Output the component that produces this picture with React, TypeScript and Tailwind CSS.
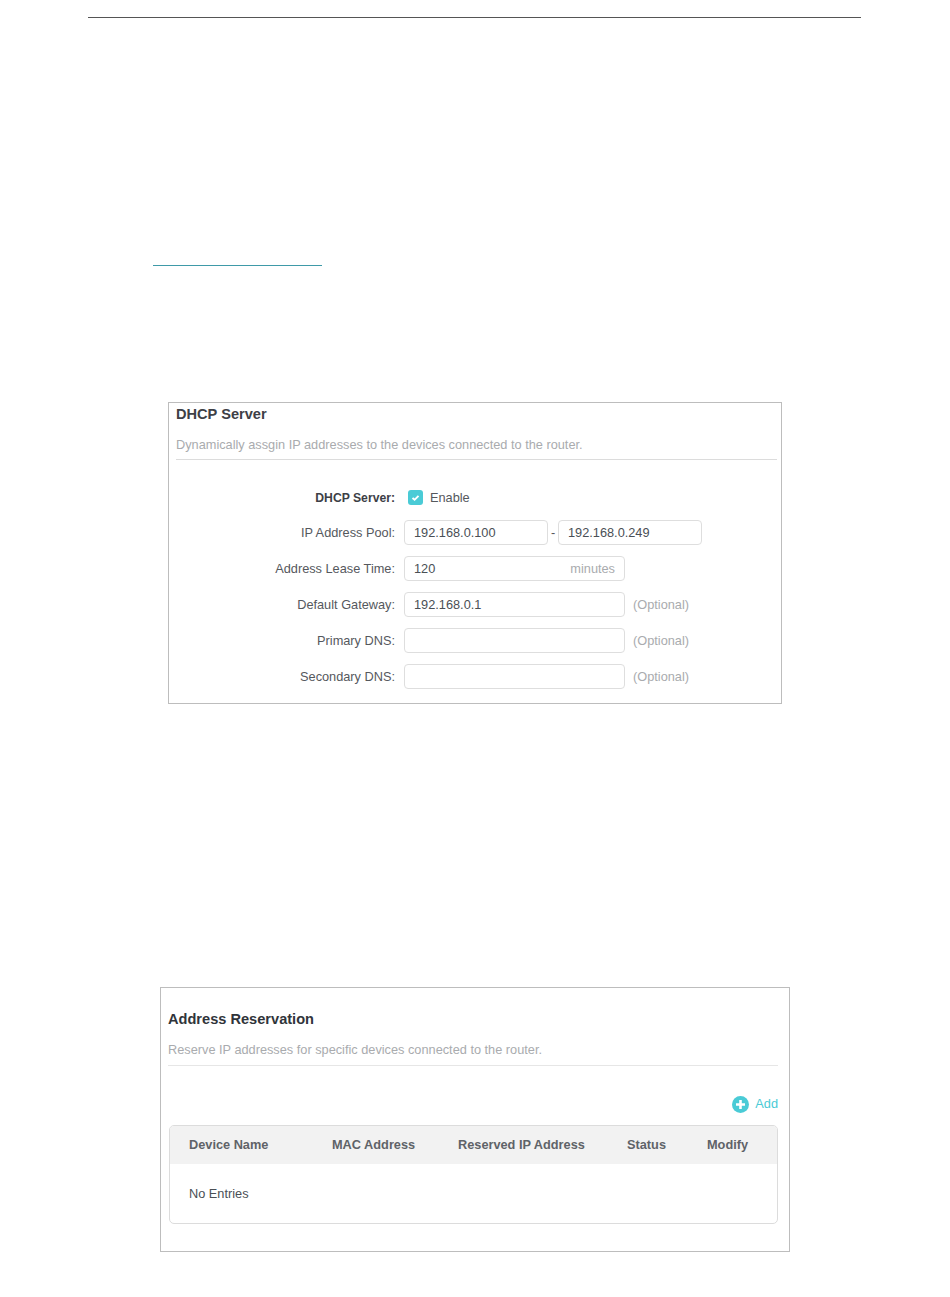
import React from "react";

const font = { fontFamily: '"Liberation Sans", Arial, sans-serif' };

function Field({ children, className = "" }: { children?: React.ReactNode; className?: string }) {
  return (
    <div className={`h-[25px] border border-[#dedede] rounded-[4px] flex items-center justify-between px-[9px] text-[12.75px] text-[#4a4f55] bg-white ${className}`}>
      {children}
    </div>
  );
}

const Optional = () => <span className="ml-[8px] text-[12.75px] text-[#a9abae]">(Optional)</span>;

export default function App() {
  return (
    <div style={font} className="w-[950px] h-[1297px] bg-white overflow-hidden flex flex-col">
      <div className="mt-[17px] ml-[88px] w-[773px] h-px bg-[#555555]" />
      <div className="mt-[247px] ml-[153px] w-[169px] h-px bg-[#3f9aa8]" />

      <section className="mt-[136px] ml-[168px] w-[614px] h-[302px] border border-[#bdbdbd] pl-[7px] pr-[4px] flex flex-col">
        <h2 className="mt-[1px] h-[20px] leading-[20px] text-[14.6px] font-bold text-[#3d4046]">DHCP Server</h2>
        <p className="mt-[12px] h-[18px] leading-[18px] text-[12.75px] text-[#a9abae]">Dynamically assgin IP addresses to the devices connected to the router.</p>
        <div className="mt-[5px] h-px bg-[#dcdcdc]" />
        <div className="mt-[25px] flex flex-col">
          <div className="flex items-center h-[25px] mb-[10px]">
            <div className="w-[219px] pt-[1px] text-right text-[12.2px] font-bold text-[#3d4046]">DHCP Server:</div>
            <div className="ml-[13px] w-[15px] h-[15px] rounded-[3px] bg-[#4acbd6] flex items-center justify-center">
              <svg width="9" height="8" viewBox="0 0 9 8" fill="none">
                <path d="M1.5 4 L3.6 5.8 L7.5 1.8" stroke="white" strokeWidth="1.9" />
              </svg>
            </div>
            <span className="ml-[7px] text-[12.75px] text-[#55585d]">Enable</span>
          </div>
          <div className="flex items-center h-[25px] mb-[11px]">
            <div className="w-[219px] text-right text-[12.75px] text-[#55585d]">IP Address Pool:</div>
            <div className="ml-[9px] flex items-center">
              <Field className="w-[144px]">192.168.0.100</Field>
              <span className="w-[10px] text-center text-[12.75px] text-[#55585d]">-</span>
              <Field className="w-[144px]">192.168.0.249</Field>
            </div>
          </div>
          {[
            ["Address Lease Time:", "120", "minutes"],
            ["Default Gateway:", "192.168.0.1", ""],
            ["Primary DNS:", "", ""],
            ["Secondary DNS:", "", ""],
          ].map(([label, value, unit]) => (
            <div key={label} className="flex items-center h-[25px] mb-[11px]">
              <div className="w-[219px] text-right text-[12.75px] text-[#55585d]">{label}</div>
              <div className="ml-[9px] flex items-center">
                <Field className="w-[221px]">
                  <span>{value}</span>
                  {unit && <span className="text-[#a9abae]">{unit}</span>}
                </Field>
                {!unit && <Optional />}
              </div>
            </div>
          ))}
        </div>
      </section>

      <section className="mt-[283px] ml-[160px] w-[630px] h-[265px] border border-[#bdbdbd] pl-[7px] pr-[11px] flex flex-col">
        <h2 className="mt-[21px] h-[20px] leading-[20px] text-[14.6px] font-bold text-[#30343a]">Address Reservation</h2>
        <p className="mt-[12px] h-[18px] leading-[18px] text-[12.75px] text-[#a9abae]">Reserve IP addresses for specific devices connected to the router.</p>
        <div className="mt-[6px] h-px bg-[#e6e6e6]" />
        <div className="mt-[29px] h-[18px] flex items-center justify-end">
          <svg width="17" height="17" viewBox="0 0 17 17">
            <circle cx="8.5" cy="8.5" r="8.5" fill="#4acbd6" />
            <path d="M8.5 4 V13 M4 8.5 H13" stroke="white" strokeWidth="2.6" />
          </svg>
          <span className="ml-[6px] text-[12.75px] text-[#4acbd6]">Add</span>
        </div>
        <div className="mt-[12px] ml-px h-[99px] border border-[#dcdcdc] rounded-[5px] overflow-hidden flex flex-col">
          <div className="h-[38px] bg-[#f2f2f2] grid grid-cols-[143px_126px_169px_80px_1fr] items-center pl-[19px] text-[12.75px] font-bold text-[#5f6368]">
            <span>Device Name</span>
            <span>MAC Address</span>
            <span>Reserved IP Address</span>
            <span>Status</span>
            <span>Modify</span>
          </div>
          <div className="flex-1 flex items-center pl-[19px] text-[12.75px] text-[#4a4f55]">No Entries</div>
        </div>
      </section>
    </div>
  );
}
